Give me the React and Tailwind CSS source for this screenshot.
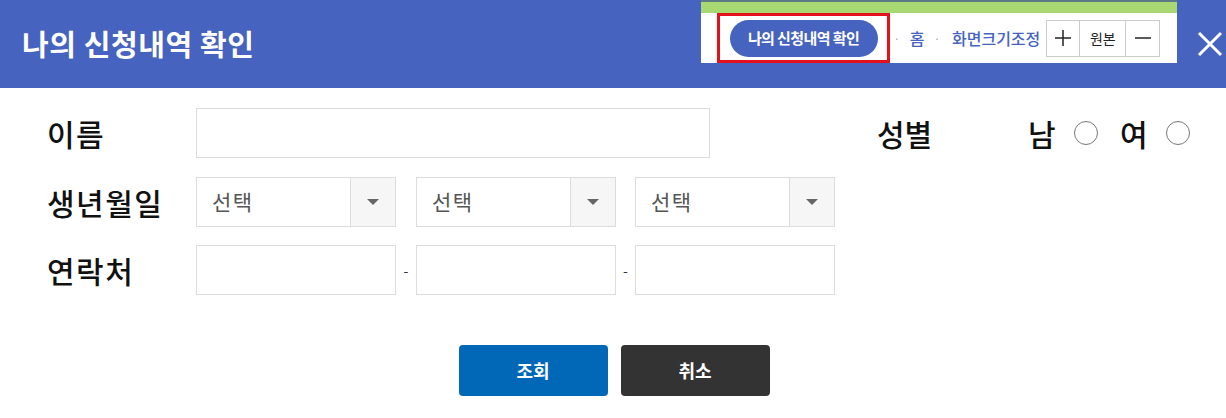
import React from "react";

const font = { fontFamily: '"Noto Sans CJK KR", "Noto Sans", sans-serif' };

function Select() {
  return (
    <div className="flex h-[50px] w-[200px] border border-[#dcdcdc] bg-white">
      <div className="flex flex-1 items-center pl-[15px] text-[21px] tracking-[1.5px] text-[#555]">선택</div>
      <div className="flex w-[45px] items-center justify-center border-l border-[#dcdcdc] bg-[#f6f6f6]">
        <svg width="12" height="6" viewBox="0 0 12 6"><path d="M0 0h12L6 6z" fill="#666" /></svg>
      </div>
    </div>
  );
}

function Input({ w = "w-[200px]" }) {
  return <div className={`h-[50px] ${w} border border-[#dcdcdc] bg-white`} />;
}

function Radio() {
  return <div className="h-[24px] w-[24px] rounded-full border border-[#777] bg-white" />;
}

export default function App() {
  return (
    <div className="h-[418px] w-[1226px] bg-white" style={font}>
      <div className="flex h-[88px] items-start bg-[#4663bf]">
        <div className="flex h-[88px] items-center pl-[22px] text-[29px] font-bold tracking-[0.6px] text-white">나의 신청내역 확인</div>
        <div className="ml-auto flex items-start">
          <div className="flex w-[476px] flex-col bg-white">
            <div className="h-[2px] bg-[#5b7a86]" />
            <div className="h-[11px] bg-[#a7d872]" />
            <div className="flex h-[50px] items-center pl-[16px]">
              <div className="flex h-[50px] w-[173px] items-center justify-center border-[3px] border-[#e3111b]">
                <div className="flex h-[37px] w-[148px] items-center justify-center rounded-full bg-[#4663bf] text-[15px] font-bold tracking-[-0.6px] text-white">나의 신청내역 확인</div>
              </div>
              <span className="ml-[4px] text-[10px] text-[#999]">·</span>
              <span className="ml-[10px] text-[16px] font-medium text-[#4663bf]">홈</span>
              <span className="ml-[10px] text-[10px] text-[#999]">·</span>
              <span className="ml-[12px] text-[16px] font-medium text-[#4663bf]">화면크기조정</span>
              <div className="ml-[6px] flex h-[37px] border border-[#ccc] text-[#222]">
                <div className="flex w-[33px] items-center justify-center border-r border-[#ccc]">
                  <svg width="16" height="16" viewBox="0 0 16 16"><path d="M8 0v16M0 8h16" stroke="#222" strokeWidth="1.5" /></svg>
                </div>
                <div className="flex w-[46px] items-center justify-center border-r border-[#ccc] text-[14px]">원본</div>
                <div className="flex w-[33px] items-center justify-center">
                  <svg width="16" height="16" viewBox="0 0 16 16"><path d="M0 8h16" stroke="#222" strokeWidth="1.5" /></svg>
                </div>
              </div>
            </div>
          </div>
          <div className="flex h-[88px] w-[49px] items-center justify-center pl-[16px]">
            <svg width="26" height="26" viewBox="0 0 26 26"><path d="M2 2L24 24M24 2L2 24" stroke="white" strokeWidth="3" /></svg>
          </div>
        </div>
      </div>

      <div className="pl-[47px] pt-[20px] text-[#111]">
        <div className="flex items-center">
          <div className="w-[149px] text-[30px] font-medium tracking-[1.5px]">이름</div>
          <Input w="w-[514px]" />
          <div className="ml-[167px] w-[151px] text-[30px] font-medium">성별</div>
          <div className="w-[28px] text-[30px] font-medium">남</div>
          <div className="ml-[18px]"><Radio /></div>
          <div className="ml-[22px] w-[28px] text-[30px] font-medium">여</div>
          <div className="ml-[18px]"><Radio /></div>
        </div>
        <div className="mt-[19px] flex items-center">
          <div className="w-[149px] text-[30px] font-medium tracking-[1.5px]">생년월일</div>
          <Select />
          <div className="w-[20px]" />
          <Select />
          <div className="w-[19px]" />
          <Select />
        </div>
        <div className="mt-[18px] flex items-center">
          <div className="w-[149px] text-[30px] font-medium tracking-[1.5px]">연락처</div>
          <Input />
          <div className="w-[20px] text-center text-[14px] text-[#333]">-</div>
          <Input />
          <div className="w-[19px] text-center text-[14px] text-[#333]">-</div>
          <Input />
        </div>
      </div>

      <div className="mt-[50px] flex justify-center gap-[13px] pl-[2px]">
        <div className="flex h-[51px] w-[149px] items-center justify-center rounded-[4px] bg-[#0068b7] text-[18px] font-bold text-white">조회</div>
        <div className="flex h-[51px] w-[149px] items-center justify-center rounded-[4px] bg-[#333333] text-[18px] font-bold text-white">취소</div>
      </div>
    </div>
  );
}
